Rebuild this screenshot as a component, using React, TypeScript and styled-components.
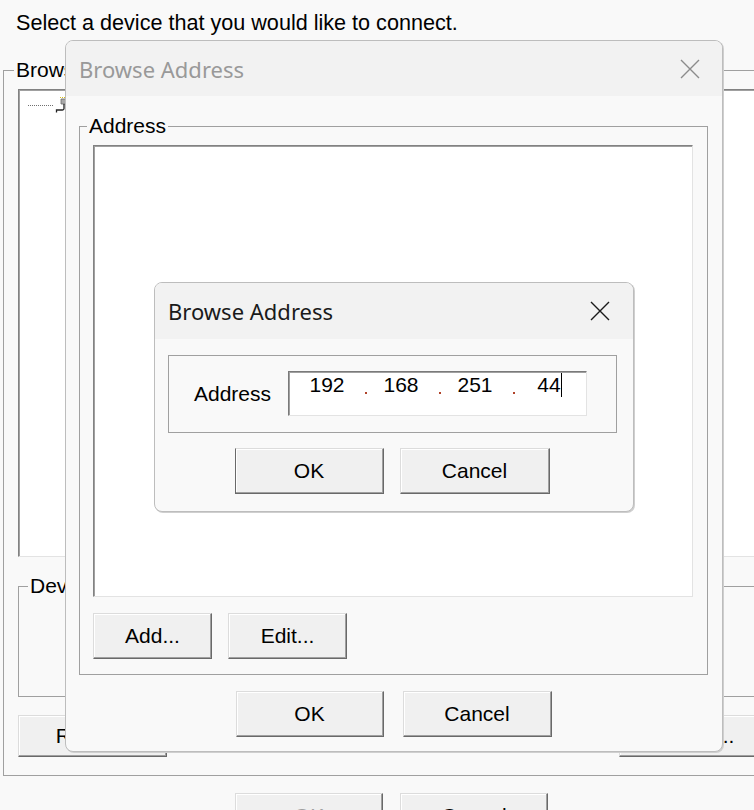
import styled, { createGlobalStyle } from "styled-components";

const GlobalStyle = createGlobalStyle`
  html, body {
    margin: 0;
    padding: 0;
    background: #f9f9f9;
  }
  body {
    font-family: "Liberation Sans", Arial, sans-serif;
  }
  * {
    box-sizing: border-box;
  }
`;

const Screen = styled.div`
  position: relative;
  width: 754px;
  height: 810px;
  overflow: hidden;
  background: #f9f9f9;
  color: #000;
  font-size: 21px;
  line-height: 24px;
`;

const Instruction = styled.div`
  padding: 11px 0 0 16px;
  font-size: 21.6px;
  white-space: nowrap;
`;

interface IGroupProps {
  $width: number;
}

const GroupBox = styled.div<IGroupProps>`
  width: ${(p) => p.$width}px;
  border: 1px solid #a0a0a0;
`;

const OuterGroup = styled(GroupBox)`
  margin: 35px 0 0 3px;
  padding: 0 14px 18px 14px;
`;

const Legend = styled.div<{ $indent: number }>`
  width: fit-content;
  margin: -13px 0 0 ${(p) => p.$indent}px;
  padding: 0 2px;
  background: #f9f9f9;
  line-height: 24px;
  white-space: nowrap;
`;

const Sunken = styled.div<{ $w: number; $h: number }>`
  width: ${(p) => p.$w}px;
  height: ${(p) => p.$h}px;
  background: #fff;
  border: 1px solid;
  border-color: #828282 #e3e3e3 #e3e3e3 #828282;
  box-shadow: inset 1px 1px #a0a0a0;
`;

const TreeView = styled(Sunken)`
  margin-top: 7px;
  padding: 6px 0 0 9px;
`;

const TreeRow = styled.div`
  display: flex;
  align-items: center;
  height: 18px;
`;

const TreeLine = styled.div`
  width: 25px;
  border-top: 1px dotted #707070;
  margin-right: 1px;
`;

const DeviceGroup = styled(GroupBox)`
  margin-top: 29px;
`;

const Spacer = styled.div<{ $h: number }>`
  height: ${(p) => p.$h}px;
`;

const ButtonRow = styled.div<{ $top: number; $gap: number; $center?: boolean; $left?: number }>`
  display: flex;
  gap: ${(p) => p.$gap}px;
  margin-top: ${(p) => p.$top}px;
  padding-left: ${(p) => p.$left ?? 0}px;
  justify-content: ${(p) => (p.$center ? "center" : "flex-start")};
`;

interface IButtonProps {
  $w: number;
  $h?: number;
  $default?: boolean;
  $disabled?: boolean;
  $push?: boolean;
}

const Button = styled.button<IButtonProps>`
  flex: none;
  width: ${(p) => p.$w}px;
  height: ${(p) => p.$h ?? 46}px;
  margin-left: ${(p) => (p.$push ? "auto" : "0")};
  padding: 0;
  background: #f0f0f0;
  border: 1px solid;
  border-color: #dcdcdc #696969 #696969
    ${(p) => (p.$default ? "#696969" : "#dcdcdc")};
  box-shadow: inset -1px -1px #a0a0a0, inset 1px 1px #fff;
  font: 21px/24px "Liberation Sans", Arial, sans-serif;
  color: ${(p) => (p.$disabled ? "#a0a0a0" : "#000")};
  white-space: nowrap;
`;

/* floating dialog windows */
interface IWindowProps {
  $x: number;
  $y: number;
  $w: number;
}

const Window = styled.div<IWindowProps>`
  position: absolute;
  left: ${(p) => p.$x}px;
  top: ${(p) => p.$y}px;
  width: ${(p) => p.$w}px;
  background: #f9f9f9;
  border: 1px solid #bdbdbd;
  border-radius: 8px;
  box-shadow: 1px 1px 0 #cfcfcf;
  overflow: hidden;
`;

const TitleBar = styled.div<{ $inactive?: boolean }>`
  display: flex;
  align-items: center;
  justify-content: space-between;
  height: ${(p) => (p.$inactive ? 55 : 56)}px;
  padding: 0 ${(p) => (p.$inactive ? 22 : 23)}px 0 13px;
  background: #f2f2f2;
  font: 22px/30px "Noto Sans", "Open Sans", sans-serif;
  color: ${(p) => (p.$inactive ? "#999999" : "#1a1a1a")};
`;

const CloseIcon = styled.svg`
  flex: none;
  display: block;
`;

const DialogBody = styled.div<{ $pad: string }>`
  padding: ${(p) => p.$pad};
`;

const AddressGroup = styled(GroupBox)`
  padding: 0 14px 15px 13px;
`;

const AddressList = styled(Sunken)`
  margin-top: 7px;
`;

const FieldBox = styled.div`
  display: flex;
  align-items: center;
  width: 449px;
  padding: 15px 0 16px 25px;
  border: 1px solid #a0a0a0;
`;

const FieldLabel = styled.div`
  width: 94px;
  flex: none;
`;

const IpField = styled.div`
  display: flex;
  align-items: flex-start;
  width: 299px;
  height: 45px;
  padding: 1px 0 0 15px;
  background: #fff;
  border: 1px solid;
  border-color: #7a7a7a #e3e3e3 #e3e3e3 #7a7a7a;
  box-shadow: inset 1px 1px #a0a0a0;
`;

const Octet = styled.div`
  width: 46px;
  text-align: center;
`;

const OctetText = styled.span<{ $caret?: boolean }>`
  position: relative;
  &::after {
    content: "";
    display: ${(p) => (p.$caret ? "block" : "none")};
    position: absolute;
    left: 100%;
    top: 0;
    width: 1px;
    height: 24px;
    background: #000;
  }
`;

const DotCell = styled.div`
  width: 28px;
  height: 24px;
  padding: 19px 0 0 15px;
`;

const Dot = styled.div`
  width: 2px;
  height: 2px;
  background: #b0432a;
`;

const Close = ({ color }: { color: string }) => (
  <CloseIcon width="20" height="20" viewBox="0 0 20 20">
    <path d="M1 1L19 19M19 1L1 19" stroke={color} strokeWidth="1.4" fill="none" />
  </CloseIcon>
);

const DeviceIcon = () => (
  <svg width="16" height="18" viewBox="0 0 16 18">
    <path d="M6 1.5H16" stroke="#d8c020" strokeWidth="1" strokeDasharray="1 1" />
    <path d="M7 3h8v5H7z" fill="#a8a8a8" stroke="#6a6a6a" strokeWidth="0.8" />
    <path d="M10 8v4.5q0 1.5-1.5 1.5H2.5v2.5" fill="none" stroke="#222" strokeWidth="1.3" />
  </svg>
);

const octets = ["192", "168", "251", "44"];

const App = () => {
  return (
    <Screen>
      <GlobalStyle />
      {/* background window */}
      <Instruction>Select a device that you would like to connect.</Instruction>
      <OuterGroup $width={780}>
        <Legend $indent={-4}>Browse Devices</Legend>
        <TreeView $w={749} $h={468}>
          <TreeRow>
            <TreeLine />
            <DeviceIcon />
          </TreeRow>
        </TreeView>
        <DeviceGroup $width={749}>
          <Legend $indent={9}>Device</Legend>
          <Spacer $h={98} />
        </DeviceGroup>
        <ButtonRow $top={18} $gap={0}>
          <Button $w={149} $h={42}>Refresh</Button>
          <Button $w={149} $h={42} $push>Details...</Button>
        </ButtonRow>
      </OuterGroup>
      <ButtonRow $top={17} $gap={17} $left={235}>
        <Button $w={148} $disabled>OK</Button>
        <Button $w={148}>Cancel</Button>
      </ButtonRow>

      {/* inactive dialog */}
      <Window $x={65} $y={40} $w={658}>
        <TitleBar $inactive>
          <span>Browse Address</span>
          <Close color="#8c8c8c" />
        </TitleBar>
        <DialogBody $pad="30px 14px 14px 13px">
          <AddressGroup $width={629}>
            <Legend $indent={-6}>Address</Legend>
            <AddressList $w={600} $h={452} />
            <ButtonRow $top={16} $gap={16}>
              <Button $w={119}>Add...</Button>
              <Button $w={119}>Edit...</Button>
            </ButtonRow>
          </AddressGroup>
          <ButtonRow $top={16} $gap={19} $center>
            <Button $w={148}>OK</Button>
            <Button $w={149}>Cancel</Button>
          </ButtonRow>
        </DialogBody>
      </Window>

      {/* active dialog */}
      <Window $x={154} $y={282} $w={480}>
        <TitleBar>
          <span>Browse Address</span>
          <Close color="#1a1a1a" />
        </TitleBar>
        <DialogBody $pad="16px 17px 17px 13px">
          <FieldBox>
            <FieldLabel>Address</FieldLabel>
            <IpField>
              {octets.map((value, index) => (
                <>
                  {index > 0 && (
                    <DotCell key={`d${index}`}>
                      <Dot />
                    </DotCell>
                  )}
                  <Octet key={`o${index}`}>
                    <OctetText $caret={index === octets.length - 1}>{value}</OctetText>
                  </Octet>
                </>
              ))}
            </IpField>
          </FieldBox>
          <ButtonRow $top={15} $gap={16} $center>
            <Button $w={149} $default>OK</Button>
            <Button $w={150}>Cancel</Button>
          </ButtonRow>
        </DialogBody>
      </Window>
    </Screen>
  );
};

export default App;
